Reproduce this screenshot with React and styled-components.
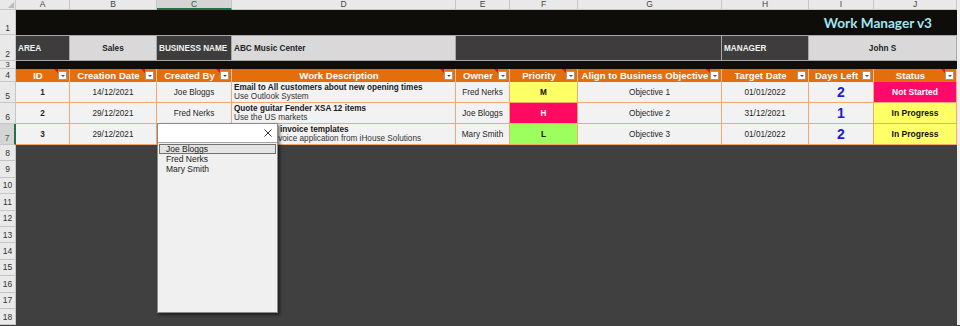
import React from 'react';
import styled, { createGlobalStyle } from 'styled-components';

const GlobalStyle = createGlobalStyle`
  html, body { margin: 0; padding: 0; background: #404040; overflow: hidden; }
  body { font-family: "Liberation Sans", Arial, sans-serif; }
`;

const columns = ['A', 'B', 'C', 'D', 'E', 'F', 'G', 'H', 'I', 'J'];

const headers = [
  { label: 'ID', note: true },
  { label: 'Creation Date', note: true },
  { label: 'Created By', note: true },
  { label: 'Work Description', note: true },
  { label: 'Owner', note: true },
  { label: 'Priority', note: true },
  { label: 'Align to Business Objective', note: true },
  { label: 'Target Date', note: false },
  { label: 'Days Left', note: false },
  { label: 'Status', note: true },
];

const tasks = [
  {
    id: 1, created: '14/12/2021', by: 'Joe Bloggs',
    title: 'Email to All customers about new opening times', detail: 'Use Outlook System',
    owner: 'Fred Nerks', priority: 'M', objective: 'Objective 1', target: '01/01/2022', days: 2, status: 'Not Started',
  },
  {
    id: 2, created: '29/12/2021', by: 'Fred Nerks',
    title: 'Quote guitar Fender XSA 12 items', detail: 'Use the US markets',
    owner: 'Joe Bloggs', priority: 'H', objective: 'Objective 2', target: '31/12/2021', days: 1, status: 'In Progress',
  },
  {
    id: 3, created: '29/12/2021', by: 'Mary Smith',
    title: 'Create new invoice templates', detail: 'Use the e-invoice application from iHouse Solutions',
    owner: 'Mary Smith', priority: 'L', objective: 'Objective 3', target: '01/01/2022', days: 2, status: 'In Progress',
  },
];

const priorityColors = {
  H: { bg: '#ff0a60', fg: '#ffffff' },
  M: { bg: '#ffff66', fg: '#111111' },
  L: { bg: '#9cff5e', fg: '#111111' },
};

const statusColors = {
  'Not Started': { bg: '#ff0a6a', fg: '#ffffff' },
  'In Progress': { bg: '#ffff66', fg: '#111111' },
};

const people = ['Joe Bloggs', 'Fred Nerks', 'Mary Smith'];

const Sheet = styled.div`
  position: relative;
  width: 960px;
  height: 326px;
  overflow: hidden;
  display: grid;
  grid-template-columns: 16px 54px 87px 75px 224px 54px 68px 144px 87px 65px 83px 3px;
  grid-template-rows: 10px 25px 26px 8px 13px 21px 21px 21px repeat(11, 16.4px) 1fr;
  background: #404040;
`;

const Corner = styled.div`
  background: #e9e9e9;
  border-right: 1px solid #c6c6c6;
  border-bottom: 1px solid #c6c6c6;
  position: relative;
  &::after {
    content: '';
    position: absolute;
    right: 1px;
    bottom: 1px;
    border-left: 6px solid transparent;
    border-bottom: 6px solid #b8b8b8;
  }
`;

const ColHead = styled.div`
  background: ${p => (p.$active ? '#d4d4d4' : '#e9e9e9')};
  border-right: 1px solid #c6c6c6;
  border-bottom: ${p => (p.$active ? '2px solid #217346' : '1px solid #c6c6c6')};
  color: ${p => (p.$active ? '#1e5e3a' : '#444')};
  font-size: 8.5px;
  line-height: 9px;
  text-align: center;
  box-sizing: border-box;
`;

const RowHead = styled.div`
  background: ${p => (p.$active ? '#d4d4d4' : '#e9e9e9')};
  border-bottom: 1px solid #c6c6c6;
  border-right: ${p => (p.$active ? '2px solid #217346' : '1px solid #c6c6c6')};
  color: ${p => (p.$active ? '#217346' : '#333')};
  font-size: ${p => (p.$tiny ? '7.5px' : '8.5px')};
  line-height: ${p => (p.$tiny ? '7px' : '10px')};
  display: flex;
  align-items: ${p => (p.$bottom ? 'flex-end' : 'center')};
  justify-content: center;
  padding-bottom: ${p => (p.$bottom && !p.$tiny ? '1px' : '0')};
  box-sizing: border-box;
  overflow: hidden;
`;

const Edge = styled.div`
  background: #efefef;
`;

const Banner = styled.div`
  grid-column: span 10;
  background: #0e0d09;
  display: flex;
  align-items: center;
  justify-content: flex-end;
  padding-right: 25px;
`;

const Title = styled.h1`
  margin: 0;
  font-family: Lato, "Open Sans", sans-serif;
  font-weight: 700;
  font-size: 13.6px;
  color: #a3e4f3;
  letter-spacing: 0;
`;

const InfoCell = styled.div`
  grid-column: span ${p => p.$span || 1};
  background: ${p => (p.$dark ? '#3d3d3d' : '#d9d9d9')};
  color: ${p => (p.$dark ? '#f2f2f2' : '#222')};
  border-top: 1px solid #a8a8a8;
  border-right: 1px solid #a8a8a8;
  border-bottom: 1px solid #a8a8a8;
  font-size: 8.2px;
  font-weight: 700;
  display: flex;
  align-items: center;
  justify-content: ${p => (p.$center ? 'center' : 'flex-start')};
  padding-left: ${p => (p.$center ? '0' : '2px')};
  box-sizing: border-box;
  white-space: nowrap;
`;

const HeadCell = styled.div`
  position: relative;
  background: #e46d0c;
  border-right: 1px solid #f6c39a;
  display: flex;
  align-items: center;
  padding: 0 2px 0 2px;
  box-sizing: border-box;
`;

const HeadLabel = styled.span`
  flex: 1;
  text-align: center;
  color: #fff;
  font-weight: 700;
  font-size: 9.6px;
  white-space: nowrap;
`;

const FilterButton = styled.span`
  width: 9px;
  height: 9px;
  flex: none;
  background: #fff;
  border: 1px solid #9a9a9a;
  box-sizing: border-box;
  display: flex;
  align-items: center;
  justify-content: center;
  &::after {
    content: '';
    border-left: 2px solid transparent;
    border-right: 2px solid transparent;
    border-top: 2px solid #505050;
  }
`;

const NoteMark = styled.span`
  position: absolute;
  top: 0;
  right: 11px;
  border-left: 4px solid transparent;
  border-top: 4px solid #e8101a;
`;

const DataCell = styled.div`
  background: ${p => p.$bg || '#f2f2f2'};
  color: ${p => p.$fg || '#262626'};
  font-size: ${p => p.$size || '8.2px'};
  font-weight: ${p => (p.$bold ? 700 : 400)};
  border-right: 1px solid #f2a872;
  border-bottom: 1px solid #f2a872;
  display: flex;
  align-items: center;
  justify-content: center;
  box-sizing: border-box;
  white-space: nowrap;
  overflow: hidden;
`;

const ActiveCell = styled(DataCell)`
  outline: 2px solid #217346;
  outline-offset: -2px;
`;

const DescCell = styled(DataCell)`
  flex-direction: column;
  align-items: flex-start;
  justify-content: center;
  padding-left: 2px;
  line-height: 9.5px;
  overflow: visible;
  color: #1a1a1a;
`;

const DescTitle = styled.span`
  font-weight: 700;
`;

const DescNote = styled.span`
  color: #333;
`;

const Fill = styled.div`
  grid-column: span 10;
  background: #404040;
`;

const Picker = styled.div`
  position: absolute;
  left: 157px;
  top: 123px;
  width: 121px;
  height: 190px;
  background: #f0f0f0;
  border: 1px solid #8a8a8a;
  box-shadow: 2px 2px 3px rgba(0, 0, 0, 0.5);
  box-sizing: border-box;
  display: flex;
  flex-direction: column;
`;

const PickerInput = styled.div`
  height: 19px;
  flex: none;
  background: #fff;
  border-bottom: 1px solid #a8a8a8;
  display: flex;
  align-items: center;
  justify-content: flex-end;
  padding-right: 5px;
  box-sizing: border-box;
`;

const PickerList = styled.ul`
  list-style: none;
  margin: 0;
  padding: 1px 1px;
`;

const PickerItem = styled.li`
  height: 10px;
  line-height: 9px;
  font-size: 8.5px;
  color: #222;
  padding-left: 6px;
  box-sizing: border-box;
  border: 1px solid ${p => (p.$selected ? '#707070' : 'transparent')};
  background: ${p => (p.$selected ? '#e4e4e4' : 'transparent')};
`;

const CloseIcon = () => (
  <svg width="8" height="8" viewBox="0 0 8 8">
    <path d="M0.5 0.5 L7.5 7.5 M7.5 0.5 L0.5 7.5" stroke="#333" strokeWidth="1" />
  </svg>
);

const App = () => {
  const fillRows = Array.from({ length: 11 }, (_, i) => i + 8);
  return (
    <>
      <GlobalStyle />
      <Sheet>
        <Corner />
        {columns.map(c => (
          <ColHead key={c} $active={c === 'C'}>{c}</ColHead>
        ))}
        <Edge />

        <RowHead $bottom>1</RowHead>
        <Banner>
          <Title>Work Manager v3</Title>
        </Banner>
        <Edge />

        <RowHead $bottom>2</RowHead>
        <InfoCell $dark>AREA</InfoCell>
        <InfoCell $center>Sales</InfoCell>
        <InfoCell $dark>BUSINESS NAME</InfoCell>
        <InfoCell>ABC Music Center</InfoCell>
        <InfoCell $dark $span={3} />
        <InfoCell $dark>MANAGER</InfoCell>
        <InfoCell $center $span={2}>John S</InfoCell>
        <Edge />

        <RowHead $bottom $tiny>3</RowHead>
        <Banner />
        <Edge />

        <RowHead $bottom>4</RowHead>
        {headers.map(h => (
          <HeadCell key={h.label}>
            <HeadLabel>{h.label}</HeadLabel>
            <FilterButton />
            {h.note && <NoteMark />}
          </HeadCell>
        ))}
        <Edge />

        {tasks.map((t, i) => {
          const pr = priorityColors[t.priority];
          const st = statusColors[t.status];
          const ByCell = i === 2 ? ActiveCell : DataCell;
          return (
            <React.Fragment key={t.id}>
              <RowHead $bottom $active={i === 2}>{i + 5}</RowHead>
              <DataCell $bold>{t.id}</DataCell>
              <DataCell>{t.created}</DataCell>
              <ByCell>{i === 2 ? '' : t.by}</ByCell>
              <DescCell>
                <DescTitle>{t.title}</DescTitle>
                <DescNote>{t.detail}</DescNote>
              </DescCell>
              <DataCell>{t.owner}</DataCell>
              <DataCell $bg={pr.bg} $fg={pr.fg} $bold>{t.priority}</DataCell>
              <DataCell>{t.objective}</DataCell>
              <DataCell>{t.target}</DataCell>
              <DataCell $bold $size="14px" $fg="#1c1cd0">{t.days}</DataCell>
              <DataCell $bg={st.bg} $fg={st.fg} $bold $size="8.5px">{t.status}</DataCell>
              <Edge />
            </React.Fragment>
          );
        })}

        {fillRows.map(n => (
          <React.Fragment key={n}>
            <RowHead>{n}</RowHead>
            <Fill />
            <Edge />
          </React.Fragment>
        ))}

        <Picker>
          <PickerInput>
            <CloseIcon />
          </PickerInput>
          <PickerList>
            {people.map((p, i) => (
              <PickerItem key={p} $selected={i === 0}>{p}</PickerItem>
            ))}
          </PickerList>
        </Picker>
      </Sheet>
    </>
  );
};

export default App;
